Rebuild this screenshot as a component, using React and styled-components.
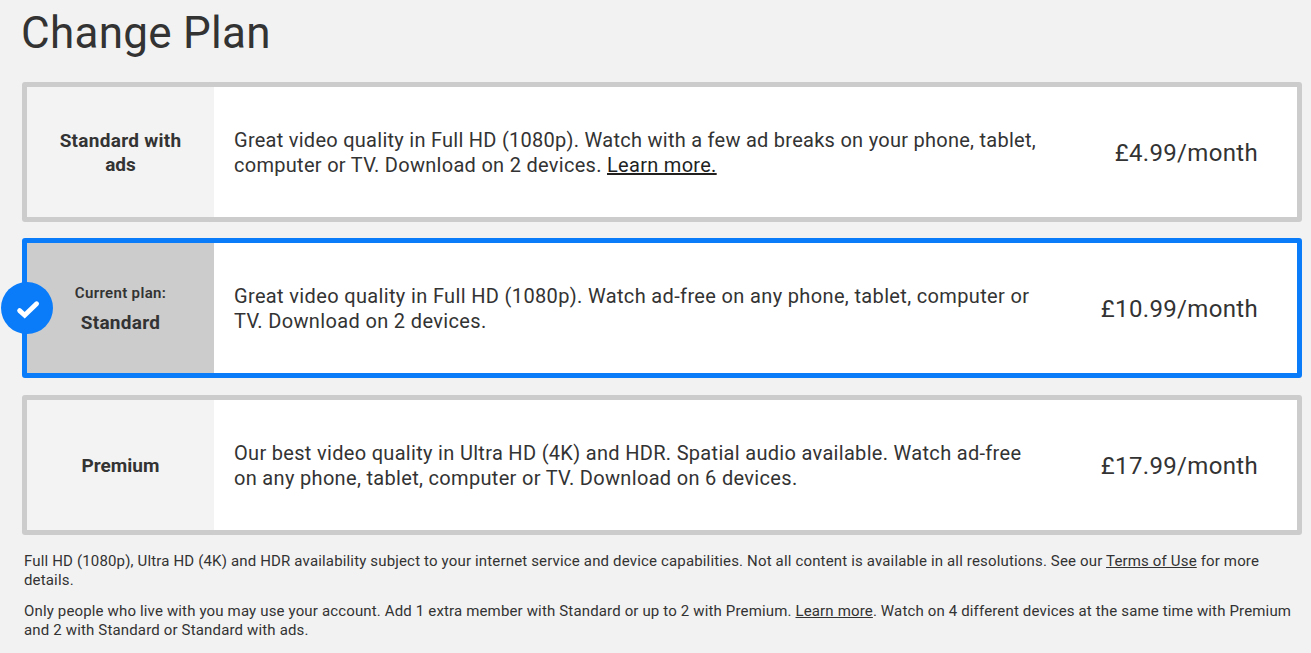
import styled, { createGlobalStyle } from "styled-components";

const GlobalStyle = createGlobalStyle`
  body {
    margin: 0;
    background-color: #f2f2f2;
    color: #333;
    font-family: Roboto, "Liberation Sans", sans-serif;
  }
`;

const Page = styled.main`
  box-sizing: border-box;
  height: 653px;
  padding: 8px 9px 0 22px;
  overflow: hidden;
`;

const Title = styled.h1`
  margin: 0 0 24px -1px;
  font-size: 44px;
  font-weight: 400;
  line-height: 50px;
  letter-spacing: 0.28px;
`;

const Plan = styled.section`
  position: relative;
  display: flex;
  box-sizing: border-box;
  height: 140px;
  margin-bottom: ${(props) => (props.$current ? "17px" : "16px")};
  border: 5px solid ${(props) => (props.$current ? "#0a7cfa" : "#ccc")};
  border-radius: 3px;
  background-color: white;
`;

const Name = styled.div`
  display: flex;
  flex-direction: column;
  align-items: center;
  justify-content: center;
  flex: 0 0 187px;
  box-sizing: border-box;
  padding-top: ${(props) => (props.$current ? "0" : "2px")};
  background-color: ${(props) => (props.$current ? "#ccc" : "#f3f3f3")};
  font-size: 19px;
  font-weight: 700;
  line-height: 24px;
  text-align: center;
`;

const CurrentLabel = styled.span`
  margin-bottom: 6px;
  font-size: 15px;
  font-weight: 600;
  letter-spacing: 0.35px;
`;

const Description = styled.p`
  flex: 1;
  align-self: center;
  margin: 0;
  padding: 2px 0 0 20px;
  font-size: 20px;
  line-height: 25px;
  white-space: nowrap;
`;

const Line = styled.span`
  letter-spacing: ${(props) => props.$spacing || "normal"};
`;

const Price = styled.div`
  align-self: center;
  padding: 2px 39px 0 0;
  font-size: 24px;
  line-height: 30px;
  letter-spacing: 0.33px;
`;

const Link = styled.a`
  color: ${(props) => props.$color || "inherit"};
  text-decoration: underline;
`;

const Badge = styled.div`
  position: absolute;
  top: 39px;
  left: -26px;
  width: 52px;
  height: 52px;
  border-radius: 50%;
  background-color: #0a7cfa;
`;

const Notes = styled.footer`
  padding: 1px 0 0 2px;
  font-size: 15px;
  line-height: 19px;
  white-space: nowrap;
`;

const Note = styled.p`
  margin: 0 0 12px;
`;

function CheckBadge() {
  return (
    <Badge>
      <svg width="52" height="52" viewBox="0 0 52 52" fill="none">
        <path d="M18.6 28.6L23.7 33.2L35.6 21.7" stroke="white" strokeWidth="4.8" strokeLinecap="round" />
      </svg>
    </Badge>
  );
}

function App() {
  return (
    <Page>
      <GlobalStyle />
      <Title>Change Plan</Title>
      <Plan>
        <Name>
          <Line $spacing="0.28px">Standard with</Line>
          <Line>ads</Line>
        </Name>
        <Description>
          <Line $spacing="0.265px">
            Great video quality in Full HD (1080p). Watch with a few ad breaks on your phone, tablet,
          </Line>
          <br />
          <Line $spacing="0.29px">
            computer or TV. Download on 2 devices. <Link $color="#221f1f">Learn more.</Link>
          </Line>
        </Description>
        <Price>£4.99/month</Price>
      </Plan>
      <Plan $current>
        <Name $current>
          <CurrentLabel>Current plan:</CurrentLabel>
          <Line $spacing="0.28px">Standard</Line>
        </Name>
        <Description>
          <Line $spacing="0.35px">
            Great video quality in Full HD (1080p). Watch ad-free on any phone, tablet, computer or
          </Line>
          <br />
          <Line $spacing="0.35px">TV. Download on 2 devices.</Line>
        </Description>
        <Price>£10.99/month</Price>
        <CheckBadge />
      </Plan>
      <Plan>
        <Name>
          <Line>Premium</Line>
        </Name>
        <Description>
          <Line $spacing="0.31px">
            Our best video quality in Ultra HD (4K) and HDR. Spatial audio available. Watch ad-free
          </Line>
          <br />
          <Line $spacing="0.32px">on any phone, tablet, computer or TV. Download on 6 devices.</Line>
        </Description>
        <Price>£17.99/month</Price>
      </Plan>
      <Notes>
        <Note>
          <Line $spacing="0.16px">
            Full HD (1080p), Ultra HD (4K) and HDR availability subject to your internet service and device
            capabilities. Not all content is available in all resolutions. See our <Link>Terms of Use</Link> for more
          </Line>
          <br />
          <Line $spacing="0.16px">details.</Line>
        </Note>
        <Note>
          <Line $spacing="0.152px">
            Only people who live with you may use your account. Add 1 extra member with Standard or up to 2 with
            Premium. <Link>Learn more</Link>. Watch on 4 different devices at the same time with Premium
          </Line>
          <br />
          <Line $spacing="0.16px">and 2 with Standard or Standard with ads.</Line>
        </Note>
      </Notes>
    </Page>
  );
}

export default App;
